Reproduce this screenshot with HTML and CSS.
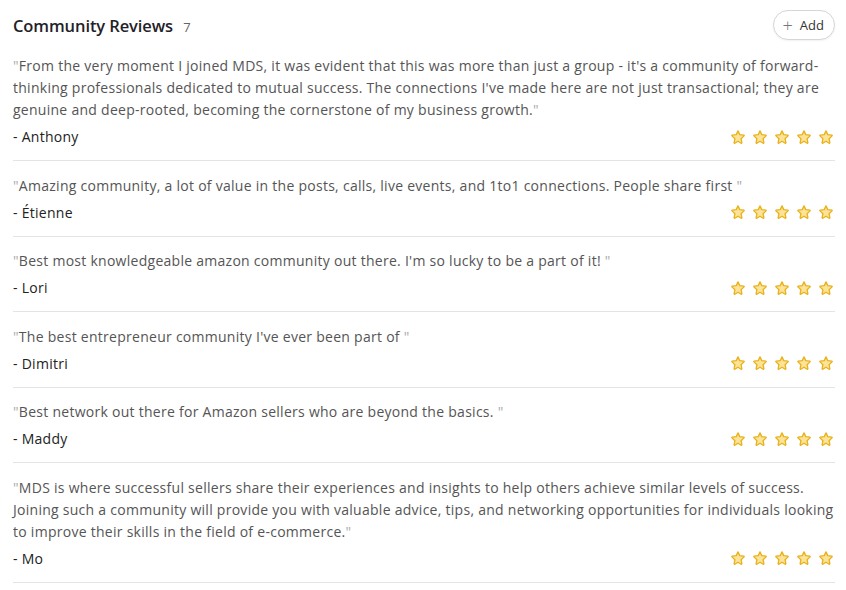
FILE: index.html
```html
<!DOCTYPE html>
<html>
<head>
<meta charset="utf-8">
<link rel="stylesheet" href="styles.css">
</head>
<body>
<svg width="0" height="0" class="defs">
  <defs>
    <symbol id="star" viewBox="0 0 24 24">
      <path d="M12 2.8l2.6 5.6 6.1.7c.6.1.8.8.4 1.2l-4.5 4.2 1.2 6c.1.6-.5 1-1 .8L12 18.3l-4.8 3c-.5.3-1.1-.2-1-.8l1.2-6-4.5-4.2c-.4-.4-.2-1.1.4-1.2l6.1-.7z" fill="#fbe39a" stroke="#e9b21c" stroke-width="2" stroke-linejoin="round"/>
    </symbol>
  </defs>
</svg>
<div class="panel">
  <div class="head">
    <h2 class="title">Community Reviews <span class="count">7</span></h2>
    <button class="add"><span class="plus">+</span> Add</button>
  </div>
  <div class="review">
    <p class="quote"><span class="q">"</span>From the very moment I joined MDS, it was evident that this was more than just a group - it's a community of forward-thinking professionals dedicated to mutual success. The connections I've made here are not just transactional; they are genuine and deep-rooted, becoming the cornerstone of my business growth.<span class="q">"</span></p>
    <div class="meta"><span class="name">- Anthony</span><span class="stars"><svg><use href="#star"/></svg><svg><use href="#star"/></svg><svg><use href="#star"/></svg><svg><use href="#star"/></svg><svg><use href="#star"/></svg></span></div>
  </div>
  <div class="review">
    <p class="quote"><span class="q">"</span>Amazing community, a lot of value in the posts, calls, live events, and 1to1 connections. People share first <span class="q">"</span></p>
    <div class="meta"><span class="name">- Étienne</span><span class="stars"><svg><use href="#star"/></svg><svg><use href="#star"/></svg><svg><use href="#star"/></svg><svg><use href="#star"/></svg><svg><use href="#star"/></svg></span></div>
  </div>
  <div class="review">
    <p class="quote"><span class="q">"</span>Best most knowledgeable amazon community out there. I'm so lucky to be a part of it! <span class="q">"</span></p>
    <div class="meta"><span class="name">- Lori</span><span class="stars"><svg><use href="#star"/></svg><svg><use href="#star"/></svg><svg><use href="#star"/></svg><svg><use href="#star"/></svg><svg><use href="#star"/></svg></span></div>
  </div>
  <div class="review">
    <p class="quote"><span class="q">"</span>The best entrepreneur community I've ever been part of <span class="q">"</span></p>
    <div class="meta"><span class="name">- Dimitri</span><span class="stars"><svg><use href="#star"/></svg><svg><use href="#star"/></svg><svg><use href="#star"/></svg><svg><use href="#star"/></svg><svg><use href="#star"/></svg></span></div>
  </div>
  <div class="review">
    <p class="quote"><span class="q">"</span>Best network out there for Amazon sellers who are beyond the basics. <span class="q">"</span></p>
    <div class="meta"><span class="name">- Maddy</span><span class="stars"><svg><use href="#star"/></svg><svg><use href="#star"/></svg><svg><use href="#star"/></svg><svg><use href="#star"/></svg><svg><use href="#star"/></svg></span></div>
  </div>
  <div class="review">
    <p class="quote"><span class="q">"</span>MDS is where successful sellers share their experiences and insights to help others achieve similar levels of success. Joining such a community will provide you with valuable advice, tips, and networking opportunities for individuals looking to improve their skills in the field of e-commerce.<span class="q">"</span></p>
    <div class="meta"><span class="name">- Mo</span><span class="stars"><svg><use href="#star"/></svg><svg><use href="#star"/></svg><svg><use href="#star"/></svg><svg><use href="#star"/></svg><svg><use href="#star"/></svg></span></div>
  </div>
</div>
</body>
</html>
```

FILE: styles.css
```css
html, body {
  margin: 0;
  padding: 0;
  background: #fff;
}
body {
  font-family: "Open Sans", "Noto Sans", sans-serif;
  color: #222;
}
.defs {
  position: absolute;
  width: 0;
  height: 0;
}
.panel {
  width: 822px;
  padding: 0 11px 0 13px;
}
.head {
  display: flex;
  align-items: center;
  justify-content: space-between;
  height: 50px;
}
.title {
  margin: 0;
  font-size: 16.5px;
  font-weight: 600;
  color: #1f2228;
  letter-spacing: -0.1px;
}
.count {
  font-size: 13px;
  font-weight: 400;
  color: #666;
  margin-left: 6px;
}
.add {
  display: flex;
  align-items: center;
  gap: 7px;
  height: 30px;
  padding: 0 10px 0 9px;
  border: 1px solid #d6d6d6;
  border-radius: 15px;
  background: #fff;
  font-family: inherit;
  font-size: 13px;
  color: #333;
  box-shadow: 0 1px 2px rgba(0,0,0,0.06);
}
.plus {
  font-size: 18px;
  font-weight: 300;
  color: #777;
  line-height: 1;
}
.review {
  padding: 5px 0 12.5px;
  border-bottom: 1px solid #e4e4e4;
}
.review + .review {
  padding-top: 13.5px;
}
.quote {
  margin: 0;
  font-size: 14px;
  line-height: 22px;
  letter-spacing: 0.27px;
  color: #555;
}
.q {
  color: #aaa;
}
.meta {
  display: flex;
  justify-content: space-between;
  align-items: center;
  margin-top: 4.5px;
  height: 22px;
}
.name {
  font-size: 14px;
  letter-spacing: 0.27px;
  color: #222;
}
.stars {
  display: flex;
  gap: 6px;
  padding-right: 1px;
}
.stars svg {
  width: 16px;
  height: 16px;
}
```
